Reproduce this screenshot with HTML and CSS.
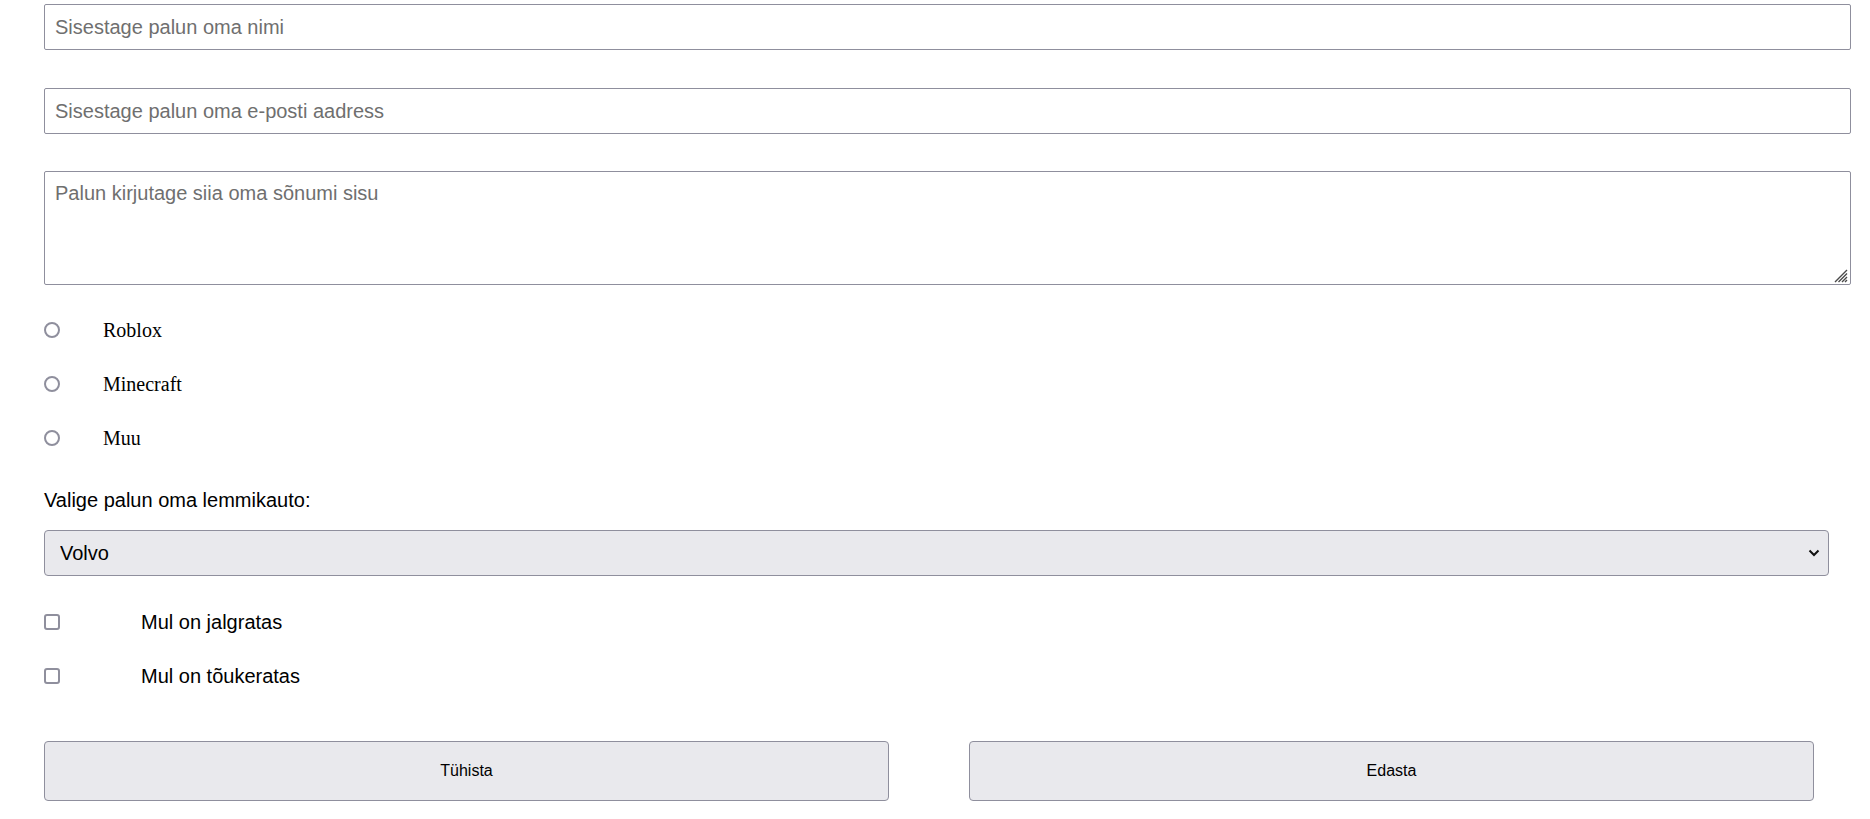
FILE: index.html
```html
<!DOCTYPE html>
<html lang="et">
  <head>
    <title>Tagasiside</title>
    <meta charset="utf-8" />
    <link rel="stylesheet" href="styles.css">
  </head>
  <body>
    <form class="vorm">
      <input class="vali" type="text" placeholder="Sisestage palun oma nimi" />
      <input class="vali" type="email" placeholder="Sisestage palun oma e-posti aadress" />
      <div class="tekstiala">
        <textarea placeholder="Palun kirjutage siia oma sõnumi sisu"></textarea>
        <svg class="haarats" width="16" height="14" viewBox="0 0 16 14">
          <path d="M15 1 L3 13 M15 4.5 L6.5 13 M15 8 L10 13 M15 11 L13 13" stroke="#4a4a4a" stroke-width="1.4" />
        </svg>
      </div>
      <div class="valik">
        <input type="radio" name="mang" id="roblox" />
        <label for="roblox">Roblox</label>
      </div>
      <div class="valik">
        <input type="radio" name="mang" id="minecraft" />
        <label for="minecraft">Minecraft</label>
      </div>
      <div class="valik">
        <input type="radio" name="mang" id="muu" />
        <label for="muu">Muu</label>
      </div>
      <label class="silt" for="auto">Valige palun oma lemmikauto:</label>
      <div class="rippmenuu">
        <select id="auto">
          <option>Volvo</option>
          <option>Saab</option>
          <option>Audi</option>
        </select>
        <svg class="nool" width="12" height="8" viewBox="0 0 12 8">
          <path d="M1.5 1.5 L6 6 L10.5 1.5" fill="none" stroke="#111" stroke-width="2" />
        </svg>
      </div>
      <div class="mark">
        <input type="checkbox" id="jalgratas" />
        <label for="jalgratas">Mul on jalgratas</label>
      </div>
      <div class="mark">
        <input type="checkbox" id="toukeratas" />
        <label for="toukeratas">Mul on tõukeratas</label>
      </div>
      <div class="nupud">
        <button type="reset">Tühista</button>
        <button type="submit">Edasta</button>
      </div>
    </form>
  </body>
</html>
```

FILE: styles.css
```css
body {
  margin: 0;
  background: #fff;
  font-family: "Liberation Sans", Arial, sans-serif;
}
.vorm {
  padding: 4px 0 0 44px;
}
.vali {
  display: block;
  box-sizing: border-box;
  width: 1807px;
  height: 46px;
  margin: 0 0 38px 0;
  padding: 0 10px;
  border: 1px solid #8f8f9d;
  border-radius: 2px;
  font-family: "Liberation Sans", Arial, sans-serif;
  font-size: 20px;
  color: #000;
}
.vali::placeholder,
textarea::placeholder {
  color: #6f6f6f;
}
.tekstiala {
  position: relative;
  width: 1807px;
  margin-top: -1px;
  margin-bottom: 18px;
}
.tekstiala textarea {
  display: block;
  box-sizing: border-box;
  width: 1807px;
  height: 114px;
  margin: 0;
  padding: 10px;
  border: 1px solid #8f8f9d;
  border-radius: 2px;
  font-family: "Liberation Sans", Arial, sans-serif;
  font-size: 20px;
  line-height: 23px;
  resize: none;
}
.haarats {
  position: absolute;
  right: 3px;
  bottom: 2px;
}
.valik,
.mark {
  display: flex;
  align-items: center;
  height: 54px;
}
.valik input,
.mark input {
  appearance: none;
  box-sizing: border-box;
  width: 16px;
  height: 16px;
  margin: 0;
  border: 2px solid #8f8f9d;
  background: #fff;
}
.valik input {
  border-radius: 50%;
}
.mark input {
  border-radius: 3px;
}
.valik label {
  margin-left: 43px;
  font-family: "Liberation Serif", "Times New Roman", serif;
  font-size: 20px;
}
.mark label {
  margin-left: 81px;
  font-size: 20px;
}
.silt {
  display: block;
  margin-top: 24px;
  font-size: 20px;
  line-height: 23px;
}
.rippmenuu {
  position: relative;
  width: 1785px;
  margin-top: 18px;
  margin-bottom: 19px;
}
.rippmenuu select {
  appearance: none;
  display: block;
  box-sizing: border-box;
  width: 1785px;
  height: 46px;
  margin: 0;
  padding: 0 40px 0 15px;
  border: 1px solid #8f8f9d;
  border-radius: 4px;
  background: #e9e9ed;
  font-family: "Liberation Sans", Arial, sans-serif;
  font-size: 20px;
  color: #000;
}
.nool {
  position: absolute;
  right: 9px;
  top: 19px;
  pointer-events: none;
}
.nupud {
  display: flex;
  gap: 80px;
  margin-top: 38px;
}
.nupud button {
  width: 845px;
  height: 60px;
  margin: 0;
  border: 1px solid #8f8f9d;
  border-radius: 4px;
  background: #e9e9ed;
  font-family: "Liberation Sans", Arial, sans-serif;
  font-size: 16px;
  color: #000;
}
```
